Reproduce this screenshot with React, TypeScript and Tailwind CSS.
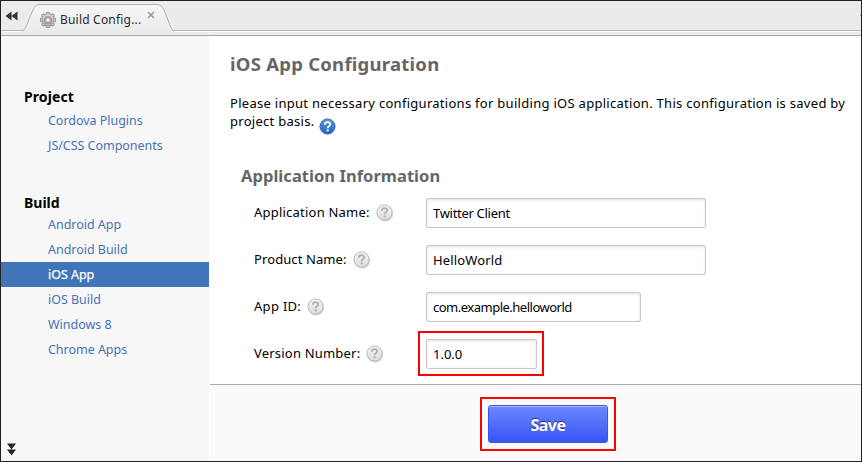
import type { ReactNode } from "react";

function Gear() {
  const teeth = Array.from({ length: 8 }, (_, i) => i * 45);
  return (
    <svg width="16" height="16" viewBox="0 0 16 16">
      <defs>
        <linearGradient id="gear" x1="0" y1="0" x2="0" y2="1">
          <stop offset="0" stopColor="#e4e4e4" />
          <stop offset="1" stopColor="#a8a8a8" />
        </linearGradient>
      </defs>
      {teeth.map((a) => (
        <rect key={a} x="6.2" y="0.4" width="3.6" height="3" rx="1" fill="#cfcfcf" stroke="#707070" strokeWidth="0.8" transform={`rotate(${a} 8 8)`} />
      ))}
      <circle cx="8" cy="8" r="5.9" fill="url(#gear)" stroke="#8c8c8c" strokeWidth="0.4" />
      <circle cx="8" cy="8" r="3.8" fill="#bdbdbd" stroke="#8c8c8c" strokeWidth="0.7" />
      <circle cx="8" cy="8" r="2.3" fill="#f7f7f7" stroke="#808080" strokeWidth="0.7" />
    </svg>
  );
}

function Help({ blue = false }: { blue?: boolean }) {
  return (
    <svg width="18" height="18" viewBox="0 0 18 18" className="shrink-0">
      <defs>
        <linearGradient id="helpBlue" x1="0" y1="0" x2="0" y2="1">
          <stop offset="0" stopColor="#6299df" />
          <stop offset="1" stopColor="#2260b8" />
        </linearGradient>
        <linearGradient id="helpGray" x1="0" y1="0" x2="0" y2="1">
          <stop offset="0" stopColor="#f2f2f2" />
          <stop offset="1" stopColor="#dedede" />
        </linearGradient>
      </defs>
      {!blue && <circle cx="9.2" cy="9.6" r="8" fill="#000" opacity="0.16" />}
      <circle cx="8.5" cy="8.5" r="7.6" fill={blue ? "url(#helpBlue)" : "url(#helpGray)"} stroke={blue ? "#2c62ae" : "#b3b3b3"} strokeWidth="0.9" />
      <path d="M5.8 6.6C5.9 4.900 7 4.100 8.500 4.100C10.100 4.100 11.200 4.900 11.200 6.300C11.200 8.200 8.700 8.100 8.700 10.200" fill="none" stroke={blue ? "#fff" : "#b0b0b0"} strokeWidth="1.8" />
      <rect x="7.7" y="11.4" width="2" height="2" fill={blue ? "#fff" : "#b0b0b0"} />
    </svg>
  );
}

function NavItem({ children, active = false }: { children: ReactNode; active?: boolean }) {
  return (
    <li className={`h-[25px] pl-[47px] text-[12.5px] leading-[25px] tracking-[-0.03px] ${active ? "bg-[#4076b8] text-white [-webkit-text-stroke:0.25px_white]" : "text-[#4773b5]"}`}>
      {children}
    </li>
  );
}

function Input({ value, width, tracking = "" }: { value: string; width: string; tracking?: string }) {
  return (
    <input
      defaultValue={value}
      className={`block h-[30px] rounded-[2px] border border-[#c8c8c8] bg-white px-1.5 pb-px text-[13px] text-black shadow-[inset_0_1px_3px_rgba(0,0,0,0.12)] outline-none ${width} ${tracking}`}
    />
  );
}

function Field({ label, tracking, children }: { label: string; tracking: string; children: ReactNode }) {
  return (
    <div className="flex h-[47px] items-start">
      <div className="flex w-[172px] items-center gap-1.5 pt-[4px] text-[13px] leading-[18px]">
        <span className={`${tracking} whitespace-nowrap`}>{label}</span>
        <span className="mt-[2px]"><Help /></span>
      </div>
      {children}
    </div>
  );
}

export default function App() {
  return (
    <div className="flex h-[462px] w-[862px] flex-col overflow-hidden border border-[#231f20] bg-white font-['Noto_Sans',sans-serif] text-black">
      <header className="flex h-[35px] shrink-0 flex-col border-b border-[#aaaaaa] bg-[#ebebeb]">
        <div className="relative flex h-[30px] shrink-0 items-start border-b border-[#b5b5b5]">
          <svg width="13" height="10" viewBox="0 0 13 10" className="ml-1 mt-[10px]">
            <path d="M6.5 0.5V9.5L0.5 5ZM12.5 0.5V9.5L6.5 5Z" fill="#333" />
          </svg>
          <div className="relative ml-[4px] flex h-[31px] w-[152px] items-start">
            <svg width="152" height="31" viewBox="0 0 152 31" className="absolute inset-0">
              <defs>
                <linearGradient id="tab" x1="0" y1="0" x2="0" y2="1">
                  <stop offset="0" stopColor="#f6f6f6" />
                  <stop offset="1" stopColor="#ebebeb" />
                </linearGradient>
              </defs>
              <path d="M0 31V29.500C3 29.500 4 26 7 18L11 9C13 5 14.500 3.500 18 3.500H134C138.500 3.500 140 5 142 9L147.500 23C149.500 28 150 29.500 152 29.500V31Z" fill="url(#tab)" />
              <path d="M0 29.500C3 29.500 4 26 7 18L11 9C13 5 14.500 3.500 18 3.500H134C138.500 3.500 140 5 142 9L147.500 23C149.500 28 150 29.500 152 29.500" fill="none" stroke="#b1b1b1" />
            </svg>
            <div className="relative ml-[18px] mt-[11px]"><Gear /></div>
            <span className="relative ml-1 mt-[9px] whitespace-nowrap text-[12px] leading-5 tracking-[0.2px] text-[#2b2b2b]">Build Config...</span>
            <svg width="8" height="8" viewBox="0 0 8 8" className="relative ml-[6px] mt-[10px]">
              <path d="M1 1L7 7M7 1L1 7" stroke="#999" strokeWidth="1.500" />
            </svg>
          </div>
          <div className="ml-auto mt-[14px] h-px w-px bg-[#888]" />
        </div>
        <div className="h-px bg-[#fafafa]" />
      </header>

      <div className="flex min-h-0 flex-1">
        <nav className="flex w-[208px] shrink-0 flex-col bg-[#f7f7f7] pt-[50px]">
          <h2 className="h-[22px] pl-[23px] text-[14px] font-bold leading-[22px] tracking-[0.1px]">Project</h2>
          <ul>
            <NavItem>Cordova Plugins</NavItem>
            <NavItem>JS/CSS Components</NavItem>
          </ul>
          <h2 className="mt-[34px] h-[20px] pl-[23px] text-[14px] font-bold leading-[22px]">Build</h2>
          <ul>
            <NavItem>Android App</NavItem>
            <NavItem>Android Build</NavItem>
            <NavItem active>iOS App</NavItem>
            <NavItem>iOS Build</NavItem>
            <NavItem>Windows 8</NavItem>
            <NavItem>Chrome Apps</NavItem>
          </ul>
          <svg width="10" height="13" viewBox="0 0 10 13" className="mb-[5px] ml-[6px] mt-auto">
            <path d="M0 0.500H9L4.500 6.500ZM0 6.500H9L4.500 12.500Z" fill="#252525" />
          </svg>
        </nav>

        <main className="flex min-w-0 flex-1 flex-col">
          <section className="min-h-0 flex-1 pl-[21px] pt-[15px]">
            <h1 className="text-[18.5px] font-bold leading-[26px] tracking-[0.25px] text-[#666]">iOS App Configuration</h1>
            <div className="mt-[17px] text-[13px] leading-[18px] tracking-[0.285px]">
              <p className="whitespace-nowrap">Please input necessary configurations for building iOS application. This configuration is saved by</p>
              <div className="flex h-[22px] items-start gap-1">
                <span>project basis.</span>
                <span className="mt-[6px]"><Help blue /></span>
              </div>
            </div>
            <h2 className="ml-[11px] mt-[30px] h-[34px] text-[16.5px] font-bold leading-[24px] tracking-[0.04px] text-[#666]">Application Information</h2>
            <form className="ml-[24px]">
              <Field label="Application Name:" tracking="tracking-[0.22px]"><Input value="Twitter Client" width="w-[280px]" tracking="tracking-[-0.3px]" /></Field>
              <Field label="Product Name:" tracking="tracking-[0.1px]"><Input value="HelloWorld" width="w-[280px]" tracking="tracking-[0.15px]" /></Field>
              <Field label="App ID:" tracking="tracking-[0.3px]"><Input value="com.example.helloworld" width="w-[215px]" tracking="tracking-[-0.5px]" /></Field>
              <Field label="Version Number:" tracking="tracking-[0.2px]">
                <div className="-ml-2 -mt-2 border-2 border-[#fe0000] pb-[5px] pl-1.5 pr-[5px] pt-1.5"><Input value="1.0.0" width="w-[111px]" /></div>
              </Field>
            </form>
          </section>
          <footer className="ml-px flex h-[77px] shrink-0 items-start justify-center border-t border-[#aaaaaa] bg-[#fafafa] pl-[25px] pt-3">
            <div className="border-2 border-[#fe0000] p-1.5">
              <button className="block h-[38px] w-[120px] rounded-[3px] border border-[#3b55ee] bg-gradient-to-b from-[#6d87fb] to-[#3853f5] pt-px text-[16px] font-bold tracking-[-0.5px] text-white shadow-[inset_0_1px_0_#a4b5fd] [text-shadow:0_-1px_1px_rgba(0,0,60,0.6)]">Save</button>
            </div>
          </footer>
        </main>
      </div>
    </div>
  );
}
